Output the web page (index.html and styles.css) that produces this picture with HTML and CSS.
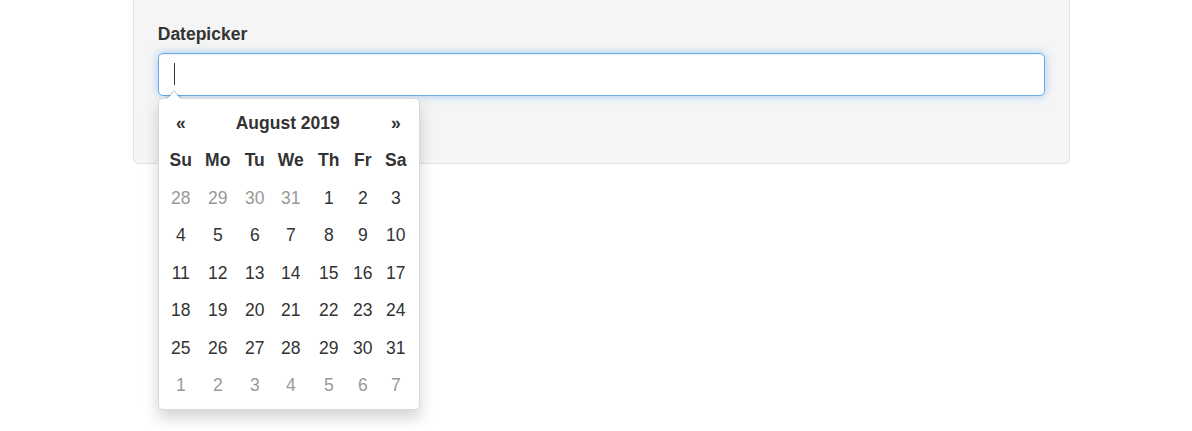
FILE: index.html
```html
<!DOCTYPE html>
<html>
<head>
<meta charset="utf-8">
<link rel="stylesheet" href="styles.css">
</head>
<body>
<div class="page">
<div class="well">
  <div class="form-group">
    <label class="label">Datepicker</label>
    <div class="input-wrap">
      <div class="form-control"><span class="caret"></span></div>
      <div class="datepicker">
        <table class="cal">
          <colgroup>
            <col class="c1"><col class="c2"><col class="c3"><col class="c4"><col class="c5"><col class="c6"><col class="c7">
          </colgroup>
          <thead>
            <tr class="nav">
              <th>«</th>
              <th colspan="5" class="title">August 2019</th>
              <th>»</th>
            </tr>
            <tr class="dow">
              <th>Su</th><th>Mo</th><th>Tu</th><th>We</th><th>Th</th><th>Fr</th><th>Sa</th>
            </tr>
          </thead>
          <tbody>
            <tr><td class="old">28</td><td class="old">29</td><td class="old">30</td><td class="old">31</td><td>1</td><td>2</td><td>3</td></tr>
            <tr><td>4</td><td>5</td><td>6</td><td>7</td><td>8</td><td>9</td><td>10</td></tr>
            <tr><td>11</td><td>12</td><td>13</td><td>14</td><td>15</td><td>16</td><td>17</td></tr>
            <tr><td>18</td><td>19</td><td>20</td><td>21</td><td>22</td><td>23</td><td>24</td></tr>
            <tr><td>25</td><td>26</td><td>27</td><td>28</td><td>29</td><td>30</td><td>31</td></tr>
            <tr><td class="old">1</td><td class="old">2</td><td class="old">3</td><td class="old">4</td><td class="old">5</td><td class="old">6</td><td class="old">7</td></tr>
          </tbody>
        </table>
      </div>
    </div>
  </div>
</div>
</div>
</body>
</html>
```
FILE: styles.css
```css
html, body {
  margin: 0;
  padding: 0;
  background: #fff;
}
body {
  font-family: "Liberation Sans", Arial, Helvetica, sans-serif;
  font-size: 17.5px;
  line-height: 1.42857;
  color: #333;
}
.page {
  min-height: 431px;
  padding-top: 1px;
  box-sizing: border-box;
}
.well {
  box-sizing: border-box;
  width: 937px;
  height: 168px;
  margin: -5px 0 0 133px;
  padding: 25px 23.75px 0 23.75px;
  background: #f5f5f5;
  border: 1px solid #e3e3e3;
  border-radius: 5px;
  box-shadow: inset 0 1px 1px rgba(0,0,0,0.05);
}
.label {
  display: block;
  font-weight: bold;
  margin-bottom: 6.25px;
}
.input-wrap {
  position: relative;
}
.form-control {
  box-sizing: border-box;
  height: 42.5px;
  padding: 9px 15px;
  background: #fff;
  border: 1px solid #66afe9;
  border-radius: 5px;
  box-shadow: inset 0 1px 1px rgba(0,0,0,0.075), 0 0 10px rgba(102,175,233,0.6);
}
.caret {
  display: block;
  width: 1px;
  height: 22px;
  background: #333;
}
.datepicker {
  position: absolute;
  top: 45px;
  left: 0;
  box-sizing: border-box;
  width: 262px;
  padding: 5px;
  background: #fff;
  border: 1px solid rgba(0,0,0,0.15);
  border-radius: 5px;
  box-shadow: 0 7.5px 15px rgba(0,0,0,0.175);
  z-index: 10;
}
.datepicker::before {
  content: "";
  position: absolute;
  top: -9px;
  left: 7px;
  border-left: 8.75px solid transparent;
  border-right: 8.75px solid transparent;
  border-bottom: 8.75px solid rgba(0,0,0,0.15);
}
.datepicker::after {
  content: "";
  position: absolute;
  top: -7.5px;
  left: 8.25px;
  border-left: 7.5px solid transparent;
  border-right: 7.5px solid transparent;
  border-bottom: 7.5px solid #fff;
}
.cal {
  width: 250px;
  border-collapse: collapse;
  border-spacing: 0;
  table-layout: fixed;
}
.cal th, .cal td {
  box-sizing: border-box;
  height: 37.5px;
  padding: 1px 0 0 0;
  text-align: center;
  vertical-align: middle;
  white-space: nowrap;
}
.cal th {
  font-weight: bold;
}
.c1 { width: 34px; }
.c2 { width: 40px; }
.c3 { width: 34px; }
.c4 { width: 38px; }
.c5 { width: 38px; }
.c6 { width: 30px; }
.c7 { width: 36px; }
.cal td.old {
  color: #999;
}
```
